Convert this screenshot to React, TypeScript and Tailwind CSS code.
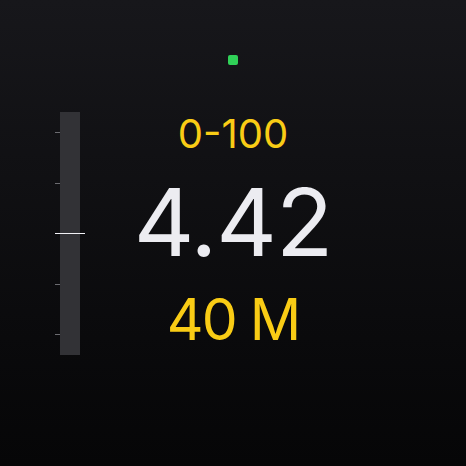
export default function App() {
  return (
    <div
      className="w-[466px] h-[466px] overflow-hidden flex flex-col bg-gradient-to-b from-[#17171b] to-[#060607]"
      style={{ fontFamily: 'Inter, "Noto Sans", sans-serif' }}
    >
      <div className="flex justify-center pt-[55px]">
        <div className="w-[10px] h-[10px] rounded-[2px] bg-[#30d158]" />
      </div>
      <div className="grid grid-cols-[1fr_auto_1fr] mt-[47px]">
        <div className="pl-[55px]">
          <div className="relative w-[30px] h-[243px] pl-[5px]">
            <div className="w-[20px] h-full bg-[#323236]" />
            <div className="absolute left-0 top-0 bottom-0 flex flex-col justify-between py-[20px]">
              <div className="w-[5px] h-px bg-[#6b6b70]" />
              <div className="w-[5px] h-px bg-[#6b6b70]" />
              <div className="w-[30px] h-px bg-[#f2f2f7]" />
              <div className="w-[5px] h-px bg-[#6b6b70]" />
              <div className="w-[5px] h-px bg-[#6b6b70]" />
            </div>
          </div>
        </div>
        <div className="flex flex-col items-center">
          <div className="text-[40px] leading-[44px] text-[#f9cc15]">0-100</div>
          <div className="text-[94px] leading-[100px] text-[#ececf1] tracking-[-1px] mt-[16px]">4.42</div>
          <div className="text-[57px] leading-[64px] text-[#f9cc15] tracking-[-2px] mt-[16px]">40 M</div>
        </div>
        <div />
      </div>
    </div>
  );
}
